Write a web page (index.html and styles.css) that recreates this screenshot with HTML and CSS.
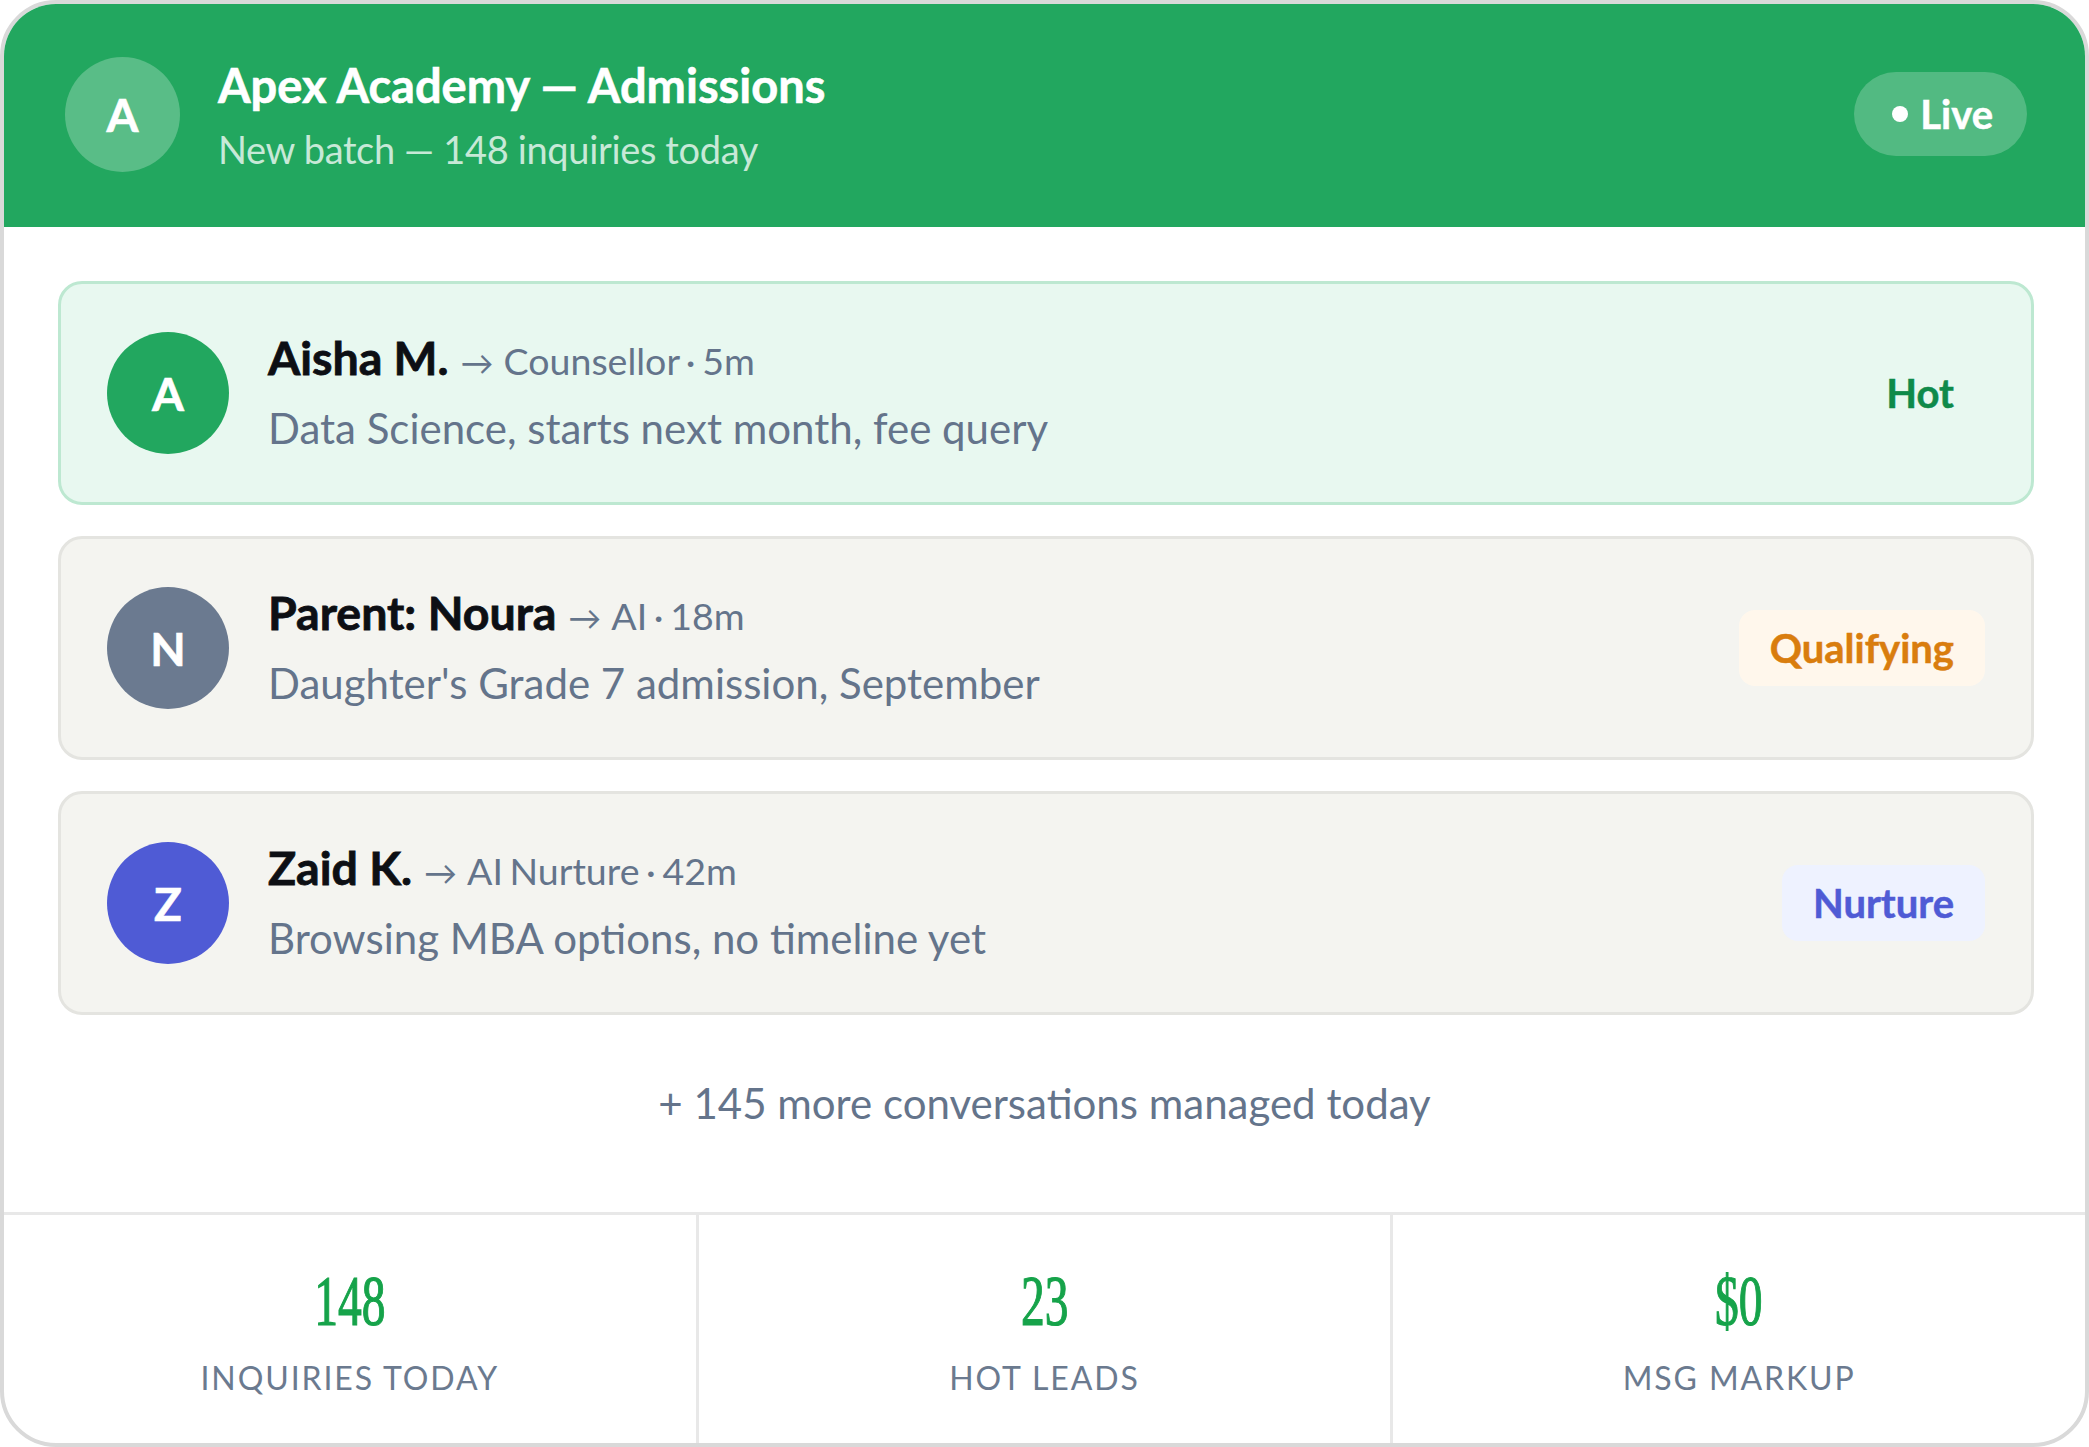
FILE: index.html
```html
<!DOCTYPE html>
<html>
<head>
	<meta charset="utf-8">
	<title>Apex Academy — Admissions</title>
	<link rel="stylesheet" href="styles.css">
</head>
<body>
	<div class="panel">
		<div class="top">
			<div class="logo">A</div>
			<div class="topText">
				<div class="topTitle">Apex Academy — Admissions</div>
				<div class="topSub">New batch — 148 inquiries today</div>
			</div>
			<div class="live"><span class="liveDot"></span>Live</div>
		</div>
		<div class="list">
			<div class="row rowHot">
				<div class="face faceGreen">A</div>
				<div class="rowText">
					<div class="rowHead"><span class="name">Aisha M.</span><span class="arrow">→</span><span class="meta">Counsellor · 5m</span></div>
					<div class="desc">Data Science, starts next month, fee query</div>
				</div>
				<div class="tag tagHot">Hot</div>
			</div>
			<div class="row">
				<div class="face faceGrey">N</div>
				<div class="rowText">
					<div class="rowHead"><span class="name">Parent: Noura</span><span class="arrow">→</span><span class="meta">AI · 18m</span></div>
					<div class="desc">Daughter's Grade 7 admission, September</div>
				</div>
				<div class="tag tagQual">Qualifying</div>
			</div>
			<div class="row">
				<div class="face faceBlue">Z</div>
				<div class="rowText">
					<div class="rowHead"><span class="name">Zaid K.</span><span class="arrow">→</span><span class="meta">AI Nurture · 42m</span></div>
					<div class="desc">Browsing MBA options, no timeline yet</div>
				</div>
				<div class="tag tagNurture">Nurture</div>
			</div>
		</div>
		<div class="more">+ 145 more conversations managed today</div>
		<div class="stats">
			<div class="stat">
				<div class="num">148</div>
				<div class="label">Inquiries today</div>
			</div>
			<div class="stat">
				<div class="num">23</div>
				<div class="label">Hot leads</div>
			</div>
			<div class="stat">
				<div class="num">$0</div>
				<div class="label">Msg markup</div>
			</div>
		</div>
	</div>
</body>
</html>
```
FILE: styles.css
```css
html,body{margin: 0;padding: 0;background-color: #fff}
body{font-family: "Lato","Liberation Sans",sans-serif}
.panel{
	box-sizing: border-box;
	width: 2089px;
	height: 1447px;
	border: 4px solid #d9d9d9;
	border-radius: 56px;
	background-color: #fff;
	overflow: hidden;
	display: flex;
	flex-direction: column;
}
.top{
	height: 223px;
	flex: none;
	box-sizing: border-box;
	padding: 0 58px 3px 61px;
	background-color: #22a75f;
	display: flex;
	align-items: center;
	color: #fff;
}
.logo{
	width: 115px;
	height: 115px;
	border-radius: 50%;
	background-color: rgba(255,255,255,0.25);
	display: flex;
	align-items: center;
	justify-content: center;
	font-size: 46px;
	font-weight: 700;
	-webkit-text-stroke: 0.6px #fff;
}
.topText{
	flex: 1;
	margin-left: 38px;
}
.topTitle{
	font-size: 47px;
	font-weight: 700;
	line-height: 60px;
	-webkit-text-stroke: 0.6px #fff;
}
.topSub{
	font-size: 38px;
	letter-spacing: -0.35px;
	line-height: 50px;
	margin-top: 9px;
	color: rgba(255,255,255,0.75);
}
.live{
	height: 84px;
	box-sizing: border-box;
	padding: 0 34px 0 38px;
	border-radius: 42px;
	background-color: rgba(255,255,255,0.22);
	display: flex;
	align-items: center;
	font-size: 40px;
	font-weight: 700;
	-webkit-text-stroke: 0.5px #fff;
}
.liveDot{
	width: 16px;
	height: 16px;
	border-radius: 50%;
	background-color: #fff;
	margin-right: 12px;
}
.list{
	padding: 54px 51px 0 54px;
	display: flex;
	flex-direction: column;
	gap: 31px;
}
.row{
	height: 224px;
	box-sizing: border-box;
	padding: 0 46px;
	border: 3px solid #e4e4e0;
	border-radius: 24px;
	background-color: #f4f4f0;
	display: flex;
	align-items: center;
}
.rowHot{
	background-color: #e8f8f0;
	border-color: #bde8d1;
}
.face{
	width: 122px;
	height: 122px;
	flex: none;
	border-radius: 50%;
	display: flex;
	align-items: center;
	justify-content: center;
	color: #fff;
	font-size: 46px;
	font-weight: 700;
	-webkit-text-stroke: 0.6px #fff;
}
.faceGreen{background-color: #22a75f}
.faceGrey{background-color: #6b7a90}
.faceBlue{background-color: #4f5bd5}
.rowText{
	flex: 1;
	margin-left: 39px;
}
.rowHead{
	display: flex;
	align-items: baseline;
	margin-top: -6px;
}
.name{
	font-size: 46.5px;
	font-weight: 700;
	line-height: 60px;
	color: #0d0f14;
	-webkit-text-stroke: 0.8px #0d0f14;
}
.arrow{
	font-size: 33px;
	margin-left: 12px;
	color: #64748b;
}
.meta{
	font-size: 37.5px;
	word-spacing: -3px;
	margin-left: 10px;
	color: #64748b;
}
.desc{
	font-size: 42px;
	line-height: 50px;
	margin-top: 16px;
	color: #64748b;
}
.tag{
	padding: 0 31px;
	height: 76px;
	line-height: 76px;
	border-radius: 16px;
	font-size: 40px;
	font-weight: 700;
	-webkit-text-stroke: 0.5px currentColor;
}
.tagHot{color: #0f8a4a}
.tagQual{color: #d97d0e;background-color: #fff7ec}
.tagNurture{color: #4f5bd5;background-color: #eef2ff}
.more{
	flex: 1;
	padding-bottom: 21px;
	display: flex;
	align-items: center;
	justify-content: center;
	font-size: 42px;
	color: #64748b;
}
.stats{
	height: 231px;
	box-sizing: border-box;
	flex: none;
	border-top: 3px solid #e8e8e8;
	display: flex;
}
.stat{
	flex: 1;
	text-align: center;
	border-left: 3px solid #e8e8e8;
}
.stat:first-child{border-left: 0}
.num{
	font-family: "Liberation Serif",serif;
	font-size: 72px;
	line-height: 72px;
	margin-top: 50px;
	color: #16a34a;
	-webkit-text-stroke: 1.2px #16a34a;
	transform: scaleX(.66);
}
.label{
	font-size: 32px;
	line-height: 40px;
	margin-top: 21px;
	letter-spacing: 1.9px;
	text-transform: uppercase;
	color: #6b7a8f;
}
```
